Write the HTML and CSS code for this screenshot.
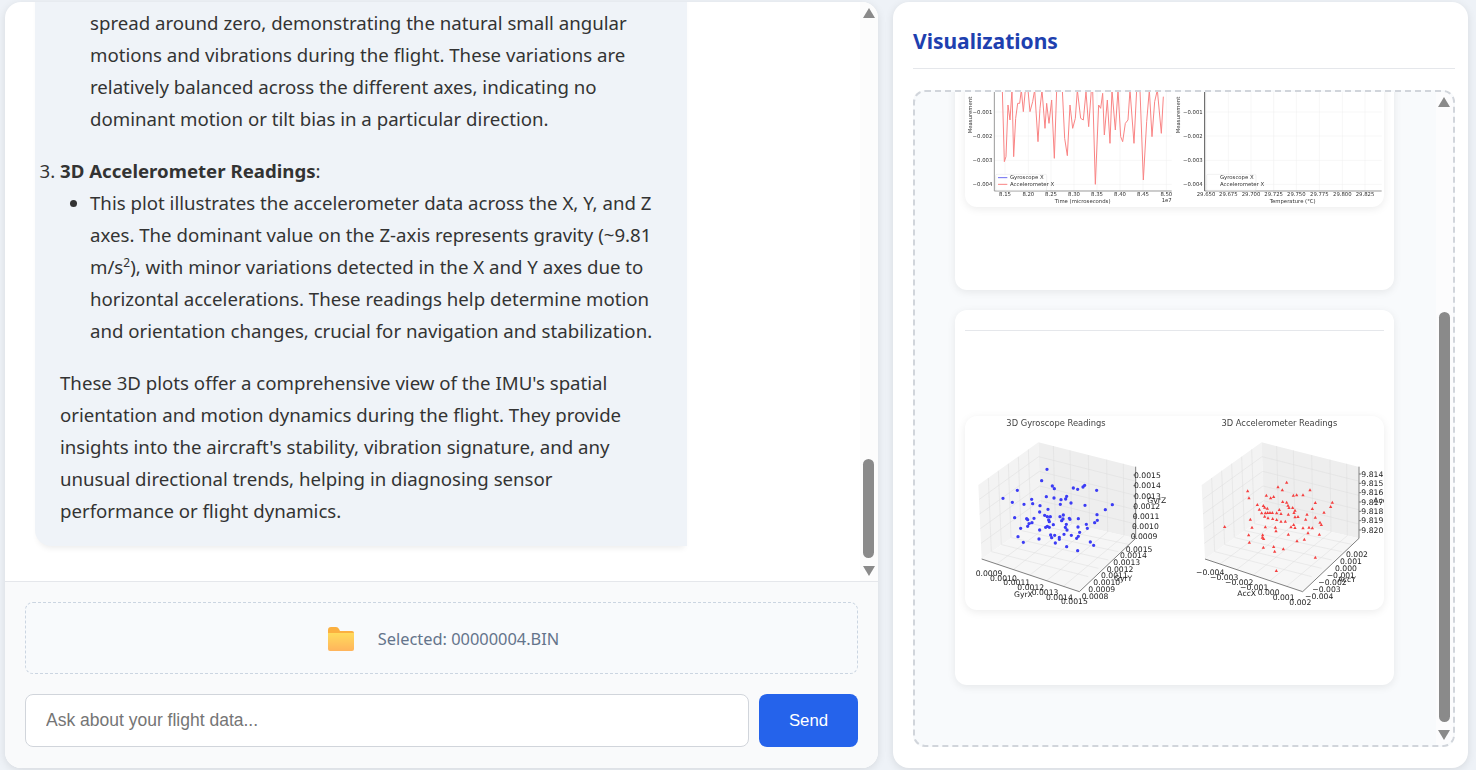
FILE: index.html
```html
<!DOCTYPE html>
<html lang="en">
<head>
  <meta charset="UTF-8" />
  <title>Flight Data Assistant</title>
  <link rel="stylesheet" href="styles.css">
</head>
<body>
  <main class="layout">
    <section class="chat-panel">
      <div class="chat-pane">
        <div class="chat-scroll">
          <div class="bubble">
            <ol start="2">
              <li>
                <strong>3D Gyroscope Readings</strong>:
                <ul>
                  <li>This plot visualizes the gyroscope data in three dimensions.<br>
                    Angular rates for each axis are tightly grouped, typically<br>
                    spread around zero, demonstrating the natural small angular<br>
                    motions and vibrations during the flight. These variations are<br>
                    relatively balanced across the different axes, indicating no<br>
                    dominant motion or tilt bias in a particular direction.</li>
                </ul>
              </li>
              <li>
                <strong>3D Accelerometer Readings</strong>:
                <ul>
                  <li>This plot illustrates the accelerometer data across the X, Y, and Z<br>
                    axes. The dominant value on the Z-axis represents gravity (~9.81<br>
                    m/s<sup>2</sup>), with minor variations detected in the X and Y axes due to<br>
                    horizontal accelerations. These readings help determine motion<br>
                    and orientation changes, crucial for navigation and stabilization.</li>
                </ul>
              </li>
            </ol>
            <p>These 3D plots offer a comprehensive view of the IMU's spatial<br>
              orientation and motion dynamics during the flight. They provide<br>
              insights into the aircraft's stability, vibration signature, and any<br>
              unusual directional trends, helping in diagnosing sensor<br>
              performance or flight dynamics.</p>
          </div>
        </div>
        <div class="scrollbar chat-bar">
          <span class="arrow-up"></span>
          <span class="thumb chat-thumb"></span>
          <span class="arrow-down"></span>
        </div>
      </div>

      <div class="chat-footer">
        <div class="upload-box">
          <svg class="folder" viewBox="0 0 26 24" width="26" height="24">
            <defs>
              <linearGradient id="folderFront" x1="0" y1="0" x2="0" y2="1">
                <stop offset="0" stop-color="#ffdb5c"/>
                <stop offset="1" stop-color="#ffb45c"/>
              </linearGradient>
            </defs>
            <path d="M0 3 Q0 0 3 0 H8 Q10 0 11 2 L12 4 H24 Q26 4 26 6 V10 H0 Z" fill="#fbb040"/>
            <path d="M0 6 H26 V22 Q26 24 24 24 H2 Q0 24 0 22 Z" fill="url(#folderFront)"/>
          </svg>
          <span class="upload-text">Selected: 00000004.BIN</span>
        </div>
        <form class="ask-row">
          <input class="ask-input" type="text" placeholder="Ask about your flight data...">
          <button class="send-btn" type="button">Send</button>
        </form>
      </div>
    </section>

    <section class="viz-panel">
      <h2 class="viz-title">Visualizations</h2>
      <div class="viz-box">
        <div class="viz-scroll">
          <div class="viz-card first-card">
            <div class="plot-card">
              <svg class="plot" viewBox="0 0 419 140" width="419" height="140">
                <g transform="translate(-15 18) scale(.33333)">
                  <path class="grid" d="M165 15V318M235 15V318M303 15V318M372 15V318M441 15V318M510 15V318M579 15V318M649 15V318M133 81H665M133 153H665M133 226H665M133 298H665"/>
                  <path class="axis" d="M133 15V318H665"/>
                  <polyline class="red-line" points="157,15 163,230 168,215 174,60 180,105 186,15 191,215 197,100 203,55 209,55 214,15 220,80 226,15 234,15 240,80 248,50 254,15 264,170 270,70 276,15 285,130 290,55 297,115 305,45 313,220 320,15 330,15 337,15 344,160 352,212 360,60 368,130 376,100 382,15 392,100 400,105 408,20 416,125 424,15 428,15 436,298 446,60 452,70 458,25 463,150 472,45 480,175 486,15 496,135 504,15 512,155 518,170 526,115 534,105 540,15 552,175 560,15 570,15 580,285 590,110 598,15 606,155 614,50 622,15 634,145 640,35"/>
                  <rect class="legend" x="137" y="268" width="153" height="48" rx="4"/>
                  <path class="blue-line" d="M144 278H172"/>
                  <path class="red-line" d="M144 298H172"/>
                  <text class="tick" x="180" y="283">Gyroscope X</text>
                  <text class="tick" x="180" y="303">Accelerometer X</text>
                  <text class="tick end" x="127" y="86">−0.001</text>
                  <text class="tick end" x="127" y="158">−0.002</text>
                  <text class="tick end" x="127" y="231">−0.003</text>
                  <text class="tick end" x="127" y="303">−0.004</text>
                  <text class="tick mid" x="165" y="334">8.15</text>
                  <text class="tick mid" x="235" y="334">8.20</text>
                  <text class="tick mid" x="303" y="334">8.25</text>
                  <text class="tick mid" x="372" y="334">8.30</text>
                  <text class="tick mid" x="441" y="334">8.35</text>
                  <text class="tick mid" x="510" y="334">8.40</text>
                  <text class="tick mid" x="579" y="334">8.45</text>
                  <text class="tick mid" x="649" y="334">8.50</text>
                  <text class="tick mid" x="650" y="352">1e7</text>
                  <text class="tick mid" x="398" y="354">Time (microseconds)</text>
                  <text class="tick mid" transform="translate(65 90) rotate(-90)">Measurement</text>
                </g>
                <g transform="translate(225 18) scale(.33333)">
                  <path class="grid" d="M48 15V318M115 15V318M183 15V318M251 15V318M319 15V318M388 15V318M457 15V318M525 15V318M44 81H575M44 153H575M44 226H575M44 298H575"/>
                  <path class="axis" d="M44 318H575"/>
                  <path class="axis-dark" d="M44 15V318"/>
                  <rect class="legend" x="50" y="268" width="148" height="48" rx="4"/>
                  <text class="tick" x="90" y="283">Gyroscope X</text>
                  <text class="tick" x="90" y="303">Accelerometer X</text>
                  <text class="tick end" x="38" y="86">−0.001</text>
                  <text class="tick end" x="38" y="158">−0.002</text>
                  <text class="tick end" x="38" y="231">−0.003</text>
                  <text class="tick end" x="38" y="303">−0.004</text>
                  <text class="tick mid" x="48" y="334">29.650</text>
                  <text class="tick mid" x="115" y="334">29.675</text>
                  <text class="tick mid" x="183" y="334">29.700</text>
                  <text class="tick mid" x="251" y="334">29.725</text>
                  <text class="tick mid" x="319" y="334">29.750</text>
                  <text class="tick mid" x="388" y="334">29.775</text>
                  <text class="tick mid" x="457" y="334">29.800</text>
                  <text class="tick mid" x="525" y="334">29.825</text>
                  <text class="tick mid" x="308" y="354">Temperature (°C)</text>
                  <text class="tick mid" transform="translate(-30 90) rotate(-90)">Measurement</text>
                </g>
              </svg>
            </div>
          </div>

          <div class="viz-card second-card">
            <hr class="card-rule">
            <div class="plot-card plot-3d">
              <svg class="plot" viewBox="0 0 419 194" width="419" height="194">
                <defs>
                  <g id="box3d">
                    <path class="pane-left" d="M55 225L235 97L243 320L65 447Z"/>
                    <path class="pane-right" d="M235 97L525 170L527 385L243 320Z"/>
                    <path class="pane-floor" d="M65 447L243 320L527 385L358 545Z"/>
                    <path class="grid3d" d="M85 204L94 425M115 182L124 404M145 161L153 383M175 140L183 362M205 118L213 341M280 108L286 330M330 121L335 341M385 135L389 354M440 149L443 366M490 161L492 377"/>
                    <path class="grid3d" d="M58 268L236 140M59 312L238 184M61 356L239 228M63 400L241 272M236 140L525 213M238 184L526 256M239 228L526 299M241 272L527 342"/>
                    <path class="grid3d" d="M110 462L288 330M160 479L335 341M210 495L389 354M260 512L443 366M310 529L492 377M95 425L385 500M125 404L415 475M155 383L445 450M185 362L475 425M213 341L505 403"/>
                    <path class="axis3d" d="M65 447L358 545L527 385V170"/>
                  </g>
                </defs>
                <g transform="translate(-5 -6) scale(.33333)">
                  <text class="title3d mid" x="288" y="48">3D Gyroscope Readings</text>
                  <use href="#box3d"/>
                  <path class="axis3d" d="M527 195h-7M527 227h-7M527 258h-7M527 290h-7M527 320h-7M527 350h-7M527 380h-7"/>
                  <path class="dots-blue" d="M261 178h0M245 212h0M277 228h0M283 236h0M172 241h0M129 265h0M157 277h0M215 268h0M192 283h0M218 281h0M259 260h0M282 264h0M303 269h0M320 259h0M317 267h0M340 234h0M353 238h0M369 231h0M374 226h0M410 241h0M333 279h0M301 283h0M375 286h0M436 299h0M457 284h0M240 287h0M239 306h0M264 298h0M164 323h0M200 326h0M203 329h0M222 325h0M216 338h0M207 341h0M203 349h0M182 355h0M174 380h0M190 397h0M237 387h0M239 360h0M254 316h0M262 320h0M271 320h0M266 330h0M268 335h0M280 344h0M262 349h0M257 352h0M268 352h0M300 320h0M310 315h0M305 332h0M328 325h0M330 328h0M309 327h0M355 326h0M319 343h0M316 352h0M321 360h0M354 351h0M379 343h0M382 355h0M404 338h0M412 331h0M411 314h0M272 375h0M275 383h0M284 376h0M298 382h0M298 388h0M312 373h0M334 376h0M359 367h0M355 379h0M350 385h0M286 399h0M320 410h0M353 422h0M391 396h0M401 406h0"/>
                  <g class="tick3d">
                    <text x="47" y="498">0.0009</text><text x="90" y="513">0.0010</text><text x="130" y="526">0.0011</text><text x="172" y="540">0.0012</text><text x="215" y="554">0.0013</text><text x="258" y="569">0.0014</text><text x="303" y="583">0.0015</text><text x="162" y="561">GyrX</text>
                    <text x="365" y="568">0.0008</text><text x="385" y="546">0.0009</text><text x="400" y="526">0.0010</text><text x="423" y="505">0.0011</text><text x="440" y="485">0.0012</text><text x="460" y="465">0.0013</text><text x="480" y="445">0.0014</text><text x="497" y="425">0.0015</text><text x="462" y="513">GyrY</text>
                    <text x="522" y="203">0.0015</text><text x="522" y="235">0.0014</text><text x="522" y="266">0.0013</text><text x="520" y="298">0.0012</text><text x="518" y="328">0.0011</text><text x="516" y="358">0.0010</text><text x="512" y="388">0.0009</text><text x="562" y="280">GyrZ</text>
                  </g>
                </g>
                <g transform="translate(215 -6) scale(.33333)">
                  <text class="title3d mid" x="298" y="48">3D Accelerometer Readings</text>
                  <use href="#box3d" x="10"/>
                  <path class="axis3d" d="M537 192h7M537 220h7M537 248h7M537 276h7M537 304h7M537 332h7M537 360h7"/>
                  <path class="dots-red" d="M320 212l-5 9h10zM294 226l-5 9h10zM307 235l-5 9h10zM390 235l-5 9h10zM203 238l-5 9h10zM207 259l-5 9h10zM259 251l-5 9h10zM272 259l-5 9h10zM281 255l-5 9h10zM340 251l-5 9h10zM350 250l-5 9h10zM369 250l-5 9h10zM308 270l-5 9h10zM320 272l-5 9h10zM406 273l-5 9h10zM457 272l-5 9h10zM452 285l-5 9h10zM232 279l-5 9h10zM238 293l-5 9h10zM250 282l-5 9h10zM254 287l-5 9h10zM262 290l-5 9h10zM298 294l-5 9h10zM324 281l-5 9h10zM327 288l-5 9h10zM338 288l-5 9h10zM345 296l-5 9h10zM342 303l-5 9h10zM397 291l-5 9h10zM432 302l-5 9h10zM245 304l-5 9h10zM256 304l-5 9h10zM263 303l-5 9h10zM270 303l-5 9h10zM277 303l-5 9h10zM290 304l-5 9h10zM303 306l-5 9h10zM325 308l-5 9h10zM354 315l-5 9h10zM345 316l-5 9h10zM381 308l-5 9h10zM406 317l-5 9h10zM377 323l-5 9h10zM420 332l-5 9h10zM424 339l-5 9h10zM254 314l-5 9h10zM264 319l-5 9h10zM278 321l-5 9h10zM290 324l-5 9h10zM303 329l-5 9h10zM316 329l-5 9h10zM211 323l-5 9h10zM216 347l-5 9h10zM256 346l-5 9h10zM286 347l-5 9h10zM288 358l-5 9h10zM333 346l-5 9h10zM341 339l-5 9h10zM345 348l-5 9h10zM369 349l-5 9h10zM387 347l-5 9h10zM397 349l-5 9h10zM325 368l-5 9h10zM384 364l-5 9h10zM418 368l-5 9h10zM206 370l-5 9h10zM248 370l-5 9h10zM247 377l-5 9h10zM251 381l-5 9h10zM208 392l-5 9h10zM351 388l-5 9h10zM373 383l-5 9h10zM134 345l-5 9h10zM250 407l-5 9h10zM281 405l-5 9h10zM284 419l-5 9h10zM310 412l-5 9h10zM406 437l-5 9h10zM289 477l-5 9h10z"/>
                  <g class="tick3d">
                    <text x="48" y="496">−0.004</text><text x="90" y="510">−0.003</text><text x="135" y="525">−0.002</text><text x="180" y="540">−0.001</text><text x="233" y="555">0.000</text><text x="278" y="570">0.001</text><text x="328" y="585">0.002</text><text x="172" y="559">AccX</text>
                    <text x="375" y="566">−0.004</text><text x="397" y="545">−0.003</text><text x="415" y="524">−0.002</text><text x="440" y="503">−0.001</text><text x="465" y="483">0.000</text><text x="480" y="462">0.001</text><text x="498" y="442">0.002</text><text x="473" y="515">AccY</text>
                    <text x="544" y="200">9.814</text><text x="544" y="228">9.815</text><text x="544" y="256">9.816</text><text x="544" y="284">9.817</text><text x="544" y="312">9.818</text><text x="544" y="340">9.819</text><text x="544" y="368">9.820</text><text x="580" y="280">AccZ</text>
                  </g>
                </g>
              </svg>
            </div>
          </div>
        </div>
        <div class="scrollbar viz-bar">
          <span class="arrow-up"></span>
          <span class="thumb viz-thumb"></span>
          <span class="arrow-down"></span>
        </div>
      </div>
    </section>
  </main>
</body>
</html>
```

FILE: styles.css
```css
* { box-sizing: border-box; }
html, body { margin: 0; height: 100%; overflow: hidden; }
body { background: #eef2f7; color: #333; font-family: "Noto Sans", Arial, sans-serif; }

.layout { display: flex; gap: 15px; height: 770px; padding: 2px 8px 2px 5px; }

/* left side */
.chat-panel {
  width: 873px; display: flex; flex-direction: column; background: #fff;
  border-radius: 16px; overflow: hidden; box-shadow: 0 2px 8px #0000001a;
}
.chat-pane { flex: 1; display: flex; min-height: 0; border-bottom: 1px solid #e5e7eb; }
.chat-scroll { flex: 1; overflow: hidden; padding-left: 30px; }
.bubble {
  width: 652px; margin-top: -91px; padding-bottom: 19px; background: #eff3f8;
  border-radius: 0 0 0 16px; box-shadow: 0 5px 6px -3px #00000014;
  font-size: 18.65px; line-height: 32px; white-space: nowrap;
}
.bubble ol { margin: 0; padding-left: 25px; }
.bubble ul { margin: 0 0 20px; padding-left: 30px; list-style-type: disc; }
.bubble p { margin: 0; padding-left: 25px; }
.bubble sup { font-size: 12px; line-height: 0; }

.scrollbar { display: flex; flex-direction: column; align-items: center; }
.chat-bar { width: 18px; padding: 6px 1px 5px 0; background: #fcfcfc; }
.viz-bar { width: 17px; padding: 5px 1px 5px 0; background: #fcfcfd; }
.arrow-up, .arrow-down { width: 0; height: 0; border-left: 6.5px solid transparent; border-right: 6.5px solid transparent; }
.arrow-up { border-bottom: 10px solid #8a8a8a; }
.arrow-down { border-top: 10px solid #8a8a8a; margin-top: 8px; }
.thumb { width: 11px; background: #8a8a8a; border-radius: 6px; margin-top: auto; }
.chat-thumb { height: 99px; }
.viz-thumb { height: 410px; }

.chat-footer { height: 186px; padding: 20px; background: #f9fafb; }
.upload-box {
  height: 72px; padding: 1px 0 0 4px; display: flex; align-items: center; justify-content: center; gap: 24px;
  background: #f8fafc; border: 1px dashed #cbd5e1; border-radius: 8px;
}
.folder { flex: none; }
.upload-text { color: #64748b; font-size: 16.4px; }
.ask-row { display: flex; gap: 10px; margin-top: 20px; }
.ask-input {
  flex: 1; height: 53px; padding: 0 20px; background: #fff; border: 1px solid #d1d5db;
  border-radius: 8px; font-family: "Liberation Sans", Arial, sans-serif; font-size: 17.5px;
}
.ask-input::placeholder { color: #757575; }
.send-btn {
  width: 99px; height: 53px; background: #2563eb; color: #fff; border: none; border-radius: 8px;
  font-family: "Liberation Sans", Arial, sans-serif; font-size: 16.8px;
}

/* right side */
.viz-panel {
  width: 575px; display: flex; flex-direction: column; padding: 20px 13px 21px 20px; background: #fff;
  border-radius: 16px; box-shadow: 0 2px 8px #0000001a;
}
.viz-title {
  margin: 0 0 21px; padding: 1px 0 9px; border-bottom: 1px solid #e5e7eb; color: #1e40af;
  font-size: 21px; line-height: 36px; font-weight: 700;
}
.viz-box {
  flex: 1; min-height: 0; display: flex; background: #f8fafc;
  border: 2px dashed #d1d5db; border-radius: 12px; overflow: hidden;
}
.viz-scroll { flex: 1; overflow: hidden; padding: 0 42px 0 40px; }
.viz-card { background: #fff; border-radius: 12px; box-shadow: 0 2px 8px #00000014; padding: 10px; }
.first-card { margin-top: -35px; padding-bottom: 83px; }
.second-card { margin-top: 20px; padding-top: 20px; padding-bottom: 75px; }
.card-rule { margin: 0 0 85px; border: none; border-top: 1px solid #e5e7eb; }
.plot-card { background: #fff; border-radius: 12px; box-shadow: 0 2px 8px #00000014; overflow: hidden; }
.plot { display: block; filter: blur(.5px); font-family: "DejaVu Sans", sans-serif; }

.grid { fill: none; stroke: #ececec; stroke-width: 1.5; }
.axis { fill: none; stroke: #999; stroke-width: 3; }
.axis-dark { fill: none; stroke: #555; stroke-width: 3; }
.red-line { fill: none; stroke: #f98484; stroke-width: 3; }
.blue-line { fill: none; stroke: #6b6bf0; stroke-width: 3; }
.legend { fill: #ffffffd0; stroke: #e2e2e2; stroke-width: 1.5; }
.tick { fill: #333; font-size: 16px; }
.end { text-anchor: end; }
.mid { text-anchor: middle; }

.pane-left { fill: #f3f3f3; }
.pane-right { fill: #eeeeee; }
.pane-floor { fill: #f6f6f6; }
.grid3d { fill: none; stroke: #dcdcdc; stroke-width: 1.5; }
.axis3d { fill: none; stroke: #666; stroke-width: 2.5; }
.title3d { fill: #444; font-size: 25px; }
.tick3d { fill: #222; font-size: 23px; }
.dots-blue { fill: none; stroke: #3c3cf5; stroke-width: 10; stroke-linecap: round; }
.dots-red { fill: #f54040; }
```
